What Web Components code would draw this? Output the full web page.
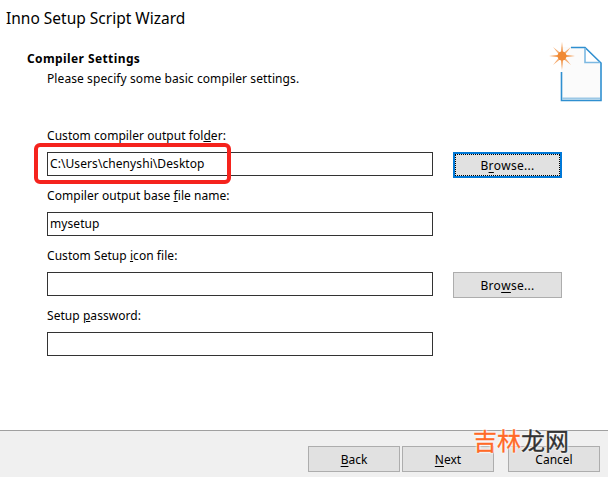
<!DOCTYPE html>
<html>
<head>
<meta charset="utf-8">
<title>Inno Setup Script Wizard</title>
<style>
    html, body { margin: 0; padding: 0; background: #fff; }
    body { width: 608px; height: 477px; overflow: hidden; font-family: "Noto Sans", "Open Sans", sans-serif; font-size: 12px; color: #000; }
</style>
</head>
<body>
<script>
const define = (name, css, html) => {
    customElements.define(name, class extends HTMLElement {
        constructor() {
            super();
            this.attachShadow({mode: 'open'});
            this.shadowRoot.innerHTML = `<style>${css}</style>${html}`;
        }
    });
};

define('win-button', `
    :host { display: block; box-sizing: border-box; width: 109px; height: 26px; background: #e1e1e1; border: 1px solid #adadad; }
    :host([wide]) { width: 92px; }
    :host([focused]) { border: 2px solid #0078d7; }
    .face { height: 100%; box-sizing: border-box; display: flex; align-items: center; justify-content: center; white-space: pre; }
    :host([focused]) .face { border: 1px dotted #000; }
    ::slotted(u) { text-underline-offset: 2px; }
`, `<div class="face"><slot></slot></div>`);

define('win-input', `
    :host { display: block; box-sizing: border-box; width: 386px; height: 24px; border: 1px solid #333; background: #fff; padding: 0 2px; line-height: 22px; white-space: nowrap; letter-spacing: .08px; }
`, `<slot></slot>`);

define('setting-field', `
    :host { display: grid; grid-template-columns: 386px 109px; grid-template-rows: 17px auto; row-gap: 8px; column-gap: 20px; align-items: start; align-content: start; height: 60px; }
    .label { grid-column: 1 / -1; line-height: 17px; letter-spacing: .05px; }
    ::slotted(win-button) { letter-spacing: .3px; }
`, `<div class="label"><slot name="label"></slot></div><win-input><slot name="value"></slot></win-input><slot name="action"></slot>`);

define('file-icon', `
    :host { display: block; width: 60px; height: 64px; }
    svg { display: block; }
`, `<svg width="60" height="64" viewBox="0 0 60 64" fill="none">
    <path d="M14 6H38L54 22V60H14Z" fill="#fbfbfb"/>
    <path d="M38 6L54 22H38Z" fill="#fff"/>
    <path d="M24 6.5H38L54 22V59.5H14.5V31" stroke="#2f8fd0" stroke-width="1.6"/>
    <path d="M15 57.5H53" stroke="#9cc8e6" stroke-width="2"/>
    <path d="M38 7V21.5H53" stroke="#7db9e2" stroke-width="1.6"/>
    <g fill="#f2964a">
        <path d="M15 1L16.4 15L15 29L13.6 15Z"/>
        <path d="M2 15L15 13.6L28 15L15 16.4Z"/>
        <path d="M6 6L16 14L24 24L14 16Z" opacity=".8"/>
        <path d="M24 6L16 16L6 24L14 14Z" opacity=".8"/>
    </g>
    <circle cx="15" cy="15" r="4.5" fill="#f08a35"/>
</svg>`);

define('wizard-header', `
    :host { display: block; position: relative; height: 122px; }
    .title { font-size: 15.5px; line-height: 20px; padding: 8px 0 0 6px; color: #000; }
    .head { font-weight: 700; line-height: 17px; padding: 22px 0 0 27px; letter-spacing: .4px; }
    .sub { line-height: 17px; padding: 3px 0 0 47px; letter-spacing: .09px; }
    file-icon { position: absolute; left: 547px; top: 41px; }
`, `<div class="title"><slot name="title"></slot></div>
    <div class="head"><slot name="head"></slot></div>
    <div class="sub"><slot name="sub"></slot></div>
    <file-icon></file-icon>`);

define('wizard-footer', `
    :host { display: flex; box-sizing: border-box; height: 47px; background: #f0f0f0; border-top: 1px solid #a0a0a0; padding: 15px 8px 0 308px; }
    .nav { display: flex; gap: 2px; margin-right: 14px; }
`, `<div class="nav"><slot name="nav"></slot></div><slot name="cancel"></slot>`);

define('wizard-page', `
    :host { display: flex; flex-direction: column; position: relative; width: 608px; height: 477px; }
    .body { flex: 1; padding: 5px 0 0 47px; box-sizing: border-box; }
    .mark { position: absolute; box-sizing: border-box; left: 34px; top: 143px; width: 197px; height: 41px; border: 4px solid #f5231d; border-radius: 6px; }
    .wm { position: absolute; left: 473px; top: 426px; font: 24px/28px "Noto Sans CJK SC", sans-serif; white-space: nowrap; color: #333; -webkit-text-stroke: .3px currentColor; text-shadow: 0 0 2px #fff, 0 0 2px #fff, 0 0 3px #fff; }
    .wm b { font-weight: 400; color: #ff6a28; }
`, `<slot name="header"></slot>
    <div class="body"><slot></slot></div>
    <slot name="footer"></slot>
    <div class="mark"></div>
    <div class="wm"><b>吉林</b>龙网</div>`);
</script>

<wizard-page>
    <wizard-header slot="header">
        <span slot="title">Inno Setup Script Wizard</span>
        <span slot="head">Compiler Settings</span>
        <span slot="sub">Please specify some basic compiler settings.</span>
    </wizard-header>

    <setting-field>
        <span slot="label">Custom compiler output fol<u>d</u>er:</span>
        <span slot="value">C:\Users\chenyshi\Desktop</span>
        <win-button slot="action" focused>B<u>r</u>owse...</win-button>
    </setting-field>
    <setting-field>
        <span slot="label">Compiler output base <u>f</u>ile name:</span>
        <span slot="value">mysetup</span>
    </setting-field>
    <setting-field>
        <span slot="label">Custom Setup <u>i</u>con file:</span>
        <win-button slot="action">Bro<u>w</u>se...</win-button>
    </setting-field>
    <setting-field>
        <span slot="label">Setup <u>p</u>assword:</span>
    </setting-field>

    <wizard-footer slot="footer">
        <win-button slot="nav" wide><u>B</u>ack</win-button>
        <win-button slot="nav" wide><u>N</u>ext</win-button>
        <win-button slot="cancel" wide>Cancel</win-button>
    </wizard-footer>
</wizard-page>
</body>
</html>
